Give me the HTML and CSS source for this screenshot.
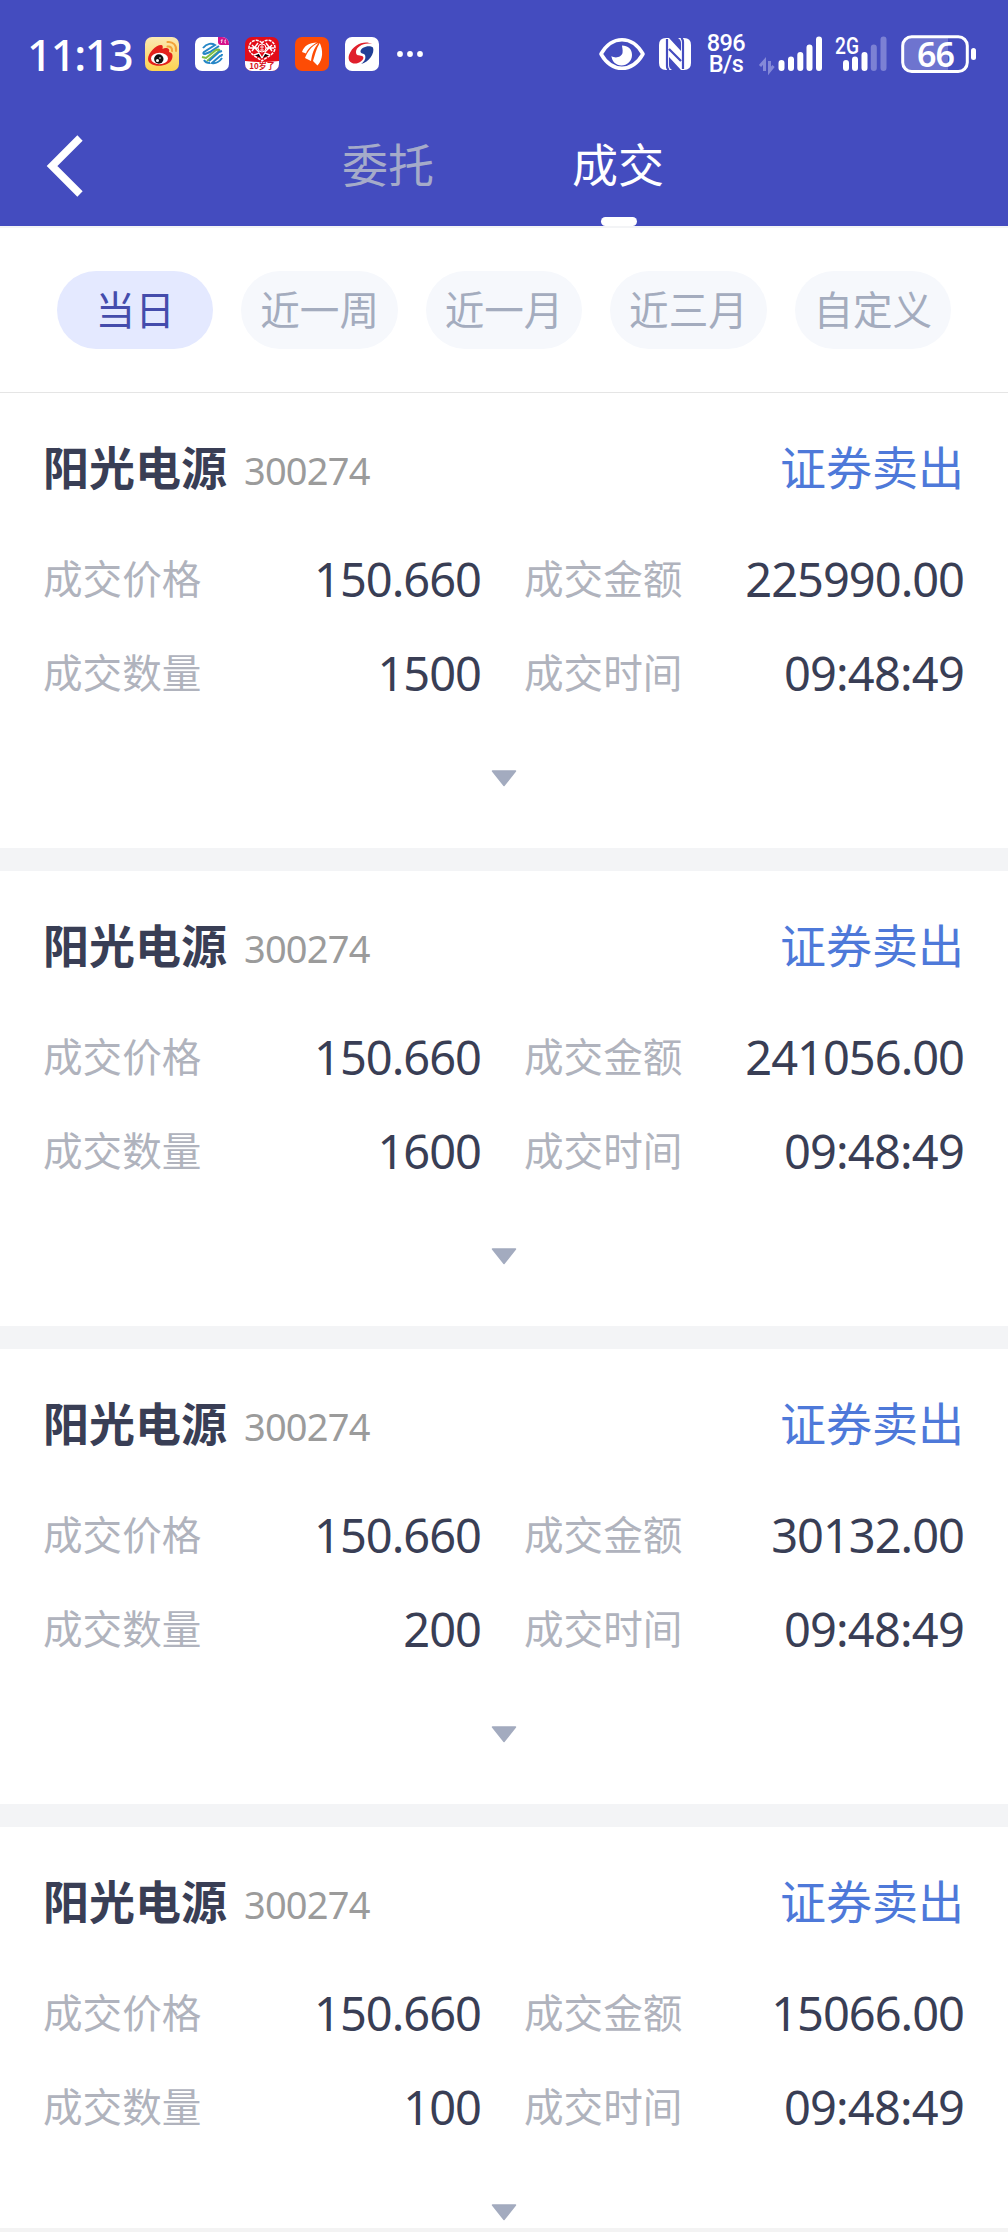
FILE: index.html
```
<!DOCTYPE html>
<html lang="zh-CN">
<head>
    <meta charset="UTF-8">
    <meta name="viewport" content="width=device-width, initial-scale=1.0">
    <title>成交</title>
    <link rel="stylesheet" href="styles.css">
</head>
<body>
    <div class="page">
        <header class="header">
            <div class="status">
                <div class="status-left">
                    <span class="time">11:13</span>
                    <svg class="app" viewBox="0 0 34 34">
                        <defs><linearGradient id="wb" x1="0" y1="0" x2="0" y2="1"><stop offset="0" stop-color="#fbe9b4"/><stop offset="1" stop-color="#fdd34f"/></linearGradient></defs>
                        <rect width="34" height="34" rx="7" fill="url(#wb)"/>
                        <path d="M3 22C3 16 11 8 16 8c2 0 2 2 1.500 4 3-2 8-1 6.500 3 4 1 4 4 3 7-3 9-24 9-24 0z" fill="#e3211b"/>
                        <ellipse cx="14.500" cy="21.500" rx="8.500" ry="5.800" fill="#fff"/>
                        <circle cx="13.800" cy="22" r="4.700" fill="#111"/>
                        <circle cx="12.500" cy="23.500" r="1.500" fill="#fff"/>
                        <circle cx="15" cy="21" r=".8" fill="#fff"/>
                        <path d="M22.500 9.500c3-.5 5 1.500 4.500 4.500M22.500 5c5.500-.8 9.500 3.500 8.500 9" fill="none" stroke="#f2a33a" stroke-width="2" stroke-linecap="round"/>
                    </svg>
                    <svg class="app" viewBox="0 0 34 34">
                        <rect width="34" height="34" rx="7" fill="#fff"/>
                        <path d="M23 0h4a7 7 0 0 1 7 7v1h-8a3 3 0 0 1-3-3z" fill="#d5118b"/>
                        <path d="M26 3h2M26 3l1 2-1 1M31 3h-1v3h1" fill="none" stroke="#fff" stroke-width=".8"/>
                        <g fill="none" stroke-width="2">
                            <path d="M8 11c4-5 9-5 12-3L9 15c-1 1-1 2 1 2l5-2 9-6" stroke="#2586c6"/>
                            <path d="M7 20l4 1 10-8c3-1 4 0 3 1L12 24" stroke="#7fbe42"/>
                            <path d="M27 14l-3 1-10 9M27 17c0 1-1 2-2 2l-8 7c4 1 8-2 10-5M9 23c1 2 3 3 6 3" stroke="#2586c6"/>
                        </g>
                    </svg>
                    <svg class="app" viewBox="0 0 34 34">
                        <rect width="34" height="34" rx="7" fill="#e30d19"/>
                        <path d="M0 24q17 2 34 0v3a7 7 0 0 1-7 7H7a7 7 0 0 1-7-7z" fill="#fff"/>
                        <path d="M17 6C13 1 4 3 4 11c0 6 8 9 13 13 5-4 13-7 13-13 0-8-9-10-13-5z" fill="#e30d19" stroke="#fff" stroke-width="1.500" stroke-dasharray="3 1"/>
                        <path d="M7 8l7 7M7 14l6-8M9 18l5-2 3 5M27 8l-7 7M27 14l-6-8M25 18l-5-2-3 5M5 11h8M21 11h8" stroke="#fff" stroke-width="1.400"/>
                        <circle cx="17" cy="11" r="4" fill="#e30d19" stroke="#fff"/>
                        <path d="M15 10h4M17 8v6M15 13h4" stroke="#fff" stroke-width=".8"/>
                        <text class="badge-text" x="17" y="32" text-anchor="middle">10岁了</text>
                    </svg>
                    <svg class="app" viewBox="0 0 34 34">
                        <rect width="34" height="34" rx="7" fill="#fd4c05"/>
                        <g fill="#fff">
                            <path d="M22 5.500C14 5.500 9 9 7 15l4 1.500C12.500 12 17 8 22 5.500z"/>
                            <path d="M23.500 6C16 9 12.500 15 10 21l6 3C17 17 19 11 23.500 6z"/>
                            <path d="M24.800 6C21 12 20 18 18 24l4.500 4.500C28.500 22 28 13 24.800 6z"/>
                        </g>
                    </svg>
                    <svg class="app" viewBox="0 0 34 34">
                        <rect width="34" height="34" rx="7" fill="#fff"/>
                        <path d="M27 7C20 3 8 7 4 18c-2 7 4 10 9 8 5-2 7-6 4-7-3-1-6 0-6-4 0-5 8-10 16-8z" fill="#e01f2b"/>
                        <path d="M15.500 14.500c0-4 8.500-7 12.500-4 2 6-4 14.500-12 16.500 4-3 5-6 4-9-1-2-4.500-1-4.500-3.500z" fill="#213e95"/>
                    </svg>
                    <svg class="dots" width="26" height="8" viewBox="0 0 26 8" fill="#fff"><circle cx="3" cy="4" r="2.900"/><circle cx="13" cy="4" r="2.900"/><circle cx="23" cy="4" r="2.900"/></svg>
                </div>
                <div class="status-right">
                    <svg width="48" height="34" viewBox="0 0 48 34">
                        <path d="M3 17C14-2 34-2 45 17 34 36 14 36 3 17z" fill="none" stroke="#fff" stroke-width="3.600" stroke-linejoin="round"/>
                        <path d="M24 8.500c6 0 10 3.500 10 9.500s-5 10.500-10.500 10.500S13.500 24 13.500 19c4 3 10 1 11-3 .6-3-.5-6-.5-7.500z" fill="#fff"/>
                    </svg>
                    <svg class="nfc" width="32" height="34" viewBox="0 0 32 34">
                        <path d="M7 1h3l12 13V6c0-2-1-4-3-5h6q7 0 7 7v18q0 7-7 7h-3L10 20v8c0 2 1 4 3 5H7q-7 0-7-7V8q0-7 7-7z" fill="#fff"/>
                        <path d="M8 2v27q0 3 2 4M24 32V5q0-3-2-4M10 12l12 12" fill="none" stroke="#444cbf" stroke-width="2.200"/>
                    </svg>
                    <div class="speed"><span>896</span><span>B/s</span></div>
                    <svg class="signal" width="64" height="38" viewBox="0 0 64 38">
                        <path d="M5.500 36V26L1 31M10.500 26v10l4-5" fill="none" stroke="#8489d8" stroke-width="3"/>
                        <path d="M22.500 28v5M32 24.500V33M41.300 20v13M50.500 12.500V33M60 4.500V33" stroke="#fff" stroke-width="6" stroke-linecap="round"/>
                    </svg>
                    <svg class="signal2" width="52" height="38" viewBox="0 0 52 38">
                        <text class="net" x="0" y="19" textLength="24" lengthAdjust="spacingAndGlyphs">2G</text>
                        <path d="M11 28v5M20 24.500V33M29.500 20v13" stroke="#fff" stroke-width="6" stroke-linecap="round"/>
                        <path d="M38.800 12.500V33M48.500 4.500V33" stroke="#7c81d4" stroke-width="6" stroke-linecap="round"/>
                    </svg>
                    <svg class="battery" width="76" height="38" viewBox="0 0 76 38">
                        <path d="M10 3h37v32H10q-7 0-7-7V10q0-7 7-7z" fill="#6e74cf"/>
                        <rect x="1.700" y="1.700" width="64.600" height="34.800" rx="9" fill="none" stroke="#fff" stroke-width="3"/>
                        <path d="M72.500 15.500v7" stroke="#fff" stroke-width="5" stroke-linecap="round"/>
                        <text class="level" x="34.500" y="31.500" text-anchor="middle">66</text>
                    </svg>
                </div>
            </div>
            <nav class="nav">
                <svg class="back" width="38" height="62" viewBox="0 0 38 62"><path d="M33 3L5 31l28 28" fill="none" stroke="#fff" stroke-width="7.500"/></svg>
                <div class="nav-tabs">
                    <span class="nav-tab">委托</span>
                    <span class="nav-tab active">成交</span>
                </div>
            </nav>
        </header>

        <div class="filters">
            <span class="pill selected">当日</span>
            <span class="pill">近一周</span>
            <span class="pill">近一月</span>
            <span class="pill">近三月</span>
            <span class="pill">自定义</span>
        </div>

        <main class="list">
            <section class="card">
                <div class="card-head"><h2>阳光电源</h2><span class="code">300274</span><span class="side">证券卖出</span></div>
                <div class="grid">
                    <div class="cell"><label>成交价格</label><b>150.660</b></div>
                    <div class="cell"><label>成交金额</label><b>225990.00</b></div>
                    <div class="cell"><label>成交数量</label><b>1500</b></div>
                    <div class="cell"><label>成交时间</label><b class="clock">09:48:49</b></div>
                </div>
                <svg class="more" viewBox="0 0 26 17"><path d="M1.500 1h23L13 15.500z"/></svg>
            </section>
            <section class="card">
                <div class="card-head"><h2>阳光电源</h2><span class="code">300274</span><span class="side">证券卖出</span></div>
                <div class="grid">
                    <div class="cell"><label>成交价格</label><b>150.660</b></div>
                    <div class="cell"><label>成交金额</label><b>241056.00</b></div>
                    <div class="cell"><label>成交数量</label><b>1600</b></div>
                    <div class="cell"><label>成交时间</label><b class="clock">09:48:49</b></div>
                </div>
                <svg class="more" viewBox="0 0 26 17"><path d="M1.500 1h23L13 15.500z"/></svg>
            </section>
            <section class="card">
                <div class="card-head"><h2>阳光电源</h2><span class="code">300274</span><span class="side">证券卖出</span></div>
                <div class="grid">
                    <div class="cell"><label>成交价格</label><b>150.660</b></div>
                    <div class="cell"><label>成交金额</label><b>30132.00</b></div>
                    <div class="cell"><label>成交数量</label><b>200</b></div>
                    <div class="cell"><label>成交时间</label><b class="clock">09:48:49</b></div>
                </div>
                <svg class="more" viewBox="0 0 26 17"><path d="M1.500 1h23L13 15.500z"/></svg>
            </section>
            <section class="card">
                <div class="card-head"><h2>阳光电源</h2><span class="code">300274</span><span class="side">证券卖出</span></div>
                <div class="grid">
                    <div class="cell"><label>成交价格</label><b>150.660</b></div>
                    <div class="cell"><label>成交金额</label><b>15066.00</b></div>
                    <div class="cell"><label>成交数量</label><b>100</b></div>
                    <div class="cell"><label>成交时间</label><b class="clock">09:48:49</b></div>
                </div>
                <svg class="more" viewBox="0 0 26 17"><path d="M1.500 1h23L13 15.500z"/></svg>
            </section>
        </main>
    </div>
</body>
</html>
```
FILE: styles.css
```
* {
    box-sizing: border-box;
}
body {
    margin: 0;
    height: 2232px;
    overflow: hidden;
    background-color: #f3f3f3;
    font-family: "Noto Sans", "Noto Sans CJK SC", sans-serif;
}
svg {
    display: block;
    flex: none;
    overflow: visible;
}
.page {
    width: 1008px;
    height: 2228px;
    overflow: hidden;
    background-color: #fff;
}
.header {
    height: 226px;
    background-color: #444cbf;
    color: #fff;
}
.status {
    display: flex;
    justify-content: space-between;
    height: 106px;
    padding: 0 31px 0 27px;
}
.status-left,
.status-right {
    display: flex;
    align-items: center;
    padding-top: 2px;
}
.time {
    width: 118px;
    font-size: 44px;
    font-weight: 500;
    line-height: 60px;
    letter-spacing: -1.500px;
    white-space: nowrap;
}
.app {
    width: 34px;
    height: 34px;
    margin-right: 16px;
}
.badge-text {
    font: bold 8px "Noto Sans CJK SC", sans-serif;
    fill: #d5101b;
}
.dots {
    margin-left: 2px;
}
.nfc {
    margin-left: 13px;
}
.speed {
    display: flex;
    flex-direction: column;
    width: 40px;
    margin-left: 15px;
    text-align: center;
    font-family: Roboto, sans-serif;
    font-size: 23.500px;
    font-weight: 500;
    line-height: 21px;
    letter-spacing: -0.6px;
}
.signal {
    margin-left: 13px;
}
.signal2 {
    margin-left: 12px;
}
.net {
    font: 500 24px Roboto, sans-serif;
    fill: #fff;
}
.battery {
    margin-left: 14px;
}
.level {
    font: 600 34px "Noto Sans", sans-serif;
    fill: #fff;
    letter-spacing: -1px;
}
.nav {
    display: flex;
    height: 120px;
    padding-left: 47px;
}
.back {
    margin-top: 29px;
}
.nav-tabs {
    display: flex;
    gap: 138px;
    margin-left: 257px;
}
.nav-tab {
    position: relative;
    width: 92px;
    font-size: 46px;
    line-height: 117px;
    color: #a5abc9;
}
.nav-tab.active {
    color: #fff;
}
.nav-tab.active::after {
    content: "";
    position: absolute;
    left: 29px;
    bottom: 0;
    width: 36px;
    height: 9px;
    border-radius: 5px;
    background-color: #fff;
}
.filters {
    display: flex;
    gap: 28px;
    height: 167px;
    padding: 43px 57px 0;
    border-top: 2px solid #f3f4f6;
    border-bottom: 1px solid #e5e5e5;
}
.pill {
    flex: 1;
    height: 78px;
    border-radius: 39px;
    background-color: #f6f8fc;
    color: #a4acbe;
    font-size: 39.600px;
    line-height: 79px;
    text-align: center;
    white-space: nowrap;
}
.pill.selected {
    background-color: #e4e9ff;
    color: #444cac;
}
.list {
    display: flex;
    flex-direction: column;
}
.card {
    flex: none;
    height: 478px;
    padding: 44px 44px 0 43px;
    border-bottom: 23px solid #f3f4f6;
}
.card-head {
    display: flex;
    height: 60px;
    line-height: 60px;
}
.card-head h2 {
    margin: 0;
    font-size: 46px;
    font-weight: 700;
    color: #393e55;
}
.code {
    margin-left: 17px;
    padding-top: 3px;
    font-size: 38px;
    letter-spacing: -0.8px;
    color: #9b9b9b;
}
.side {
    margin-left: auto;
    font-size: 46px;
    color: #4e79d9;
}
.grid {
    display: grid;
    grid-template-columns: 438px 440px;
    gap: 34px 43px;
    margin-top: 52px;
}
.cell {
    display: flex;
    justify-content: space-between;
    height: 60px;
    line-height: 60px;
}
.cell label {
    font-size: 39.600px;
    color: #b0b3bd;
}
.cell b {
    font-size: 47px;
    font-weight: 400;
    letter-spacing: -1px;
    color: #393e55;
}
.cell .clock {
    letter-spacing: -0.8px;
}
.more {
    width: 26px;
    height: 17px;
    margin: 67px auto 0;
    fill: #a3abbf;
    stroke: #a3abbf;
    stroke-width: 1.500px;
    stroke-linejoin: round;
}
```
